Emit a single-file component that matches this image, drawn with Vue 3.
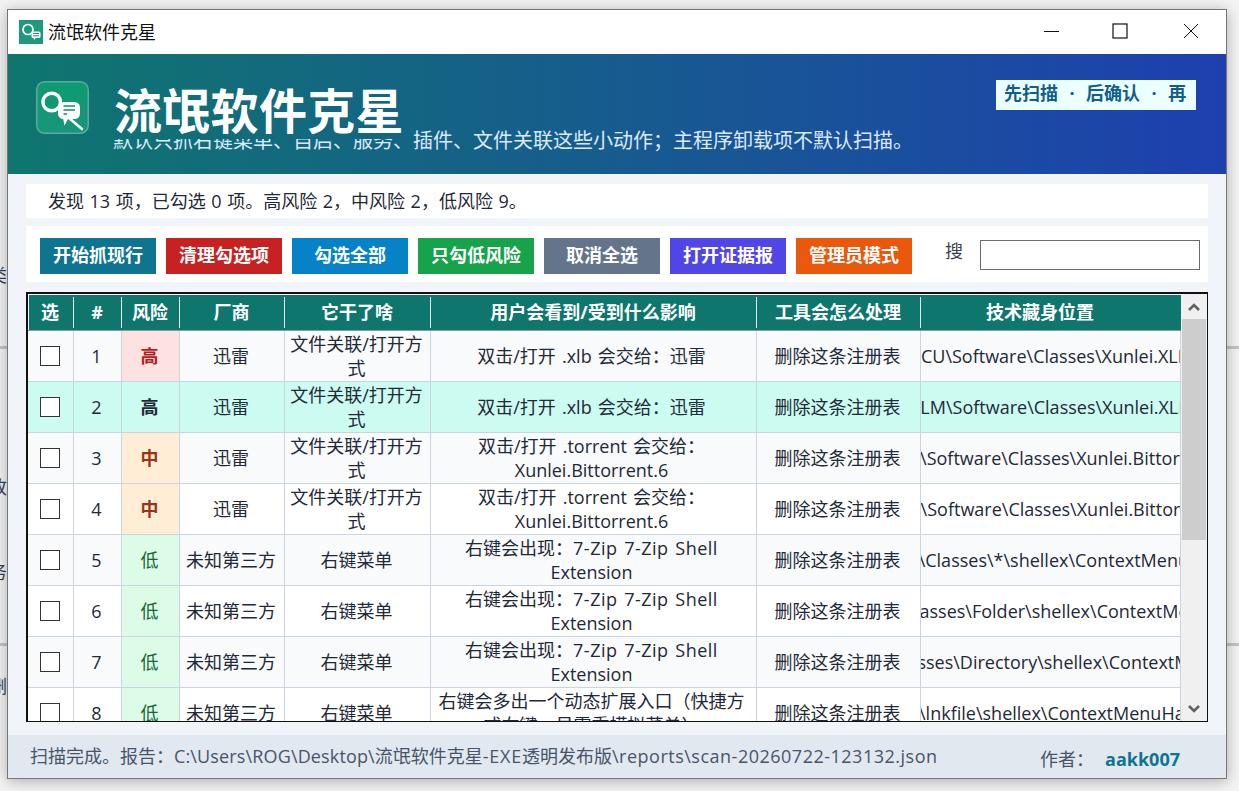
<script setup>
const cols = ['选', '#', '风险', '厂商', '它干了啥', '用户会看到/受到什么影响', '工具会怎么处理', '技术藏身位置']
const assoc = '文件关联/打开方式'
const menu = '右键菜单'
const zip = { pre: '右键会出现：', lat: '7-Zip 7-Zip Shell', post: ' Extension' }
const del = '删除这条注册表'
const rows = [
  { n: 1, risk: '高', rk: 'high', vendor: '迅雷', what: assoc, effect: { pre: '双击/打开 .xlb 会交给：迅雷' }, path: 'HKCU\\Software\\Classes\\Xunlei.XLB.6' },
  { n: 2, risk: '高', rk: 'sel', vendor: '迅雷', what: assoc, effect: { pre: '双击/打开 .xlb 会交给：迅雷' }, path: 'HKLM\\Software\\Classes\\Xunlei.XLB.6', selected: true },
  { n: 3, risk: '中', rk: 'mid', vendor: '迅雷', what: assoc, effect: { pre: '双击/打开 .torrent 会交给：Xunlei.Bittorrent.6' }, path: 'HKCU\\Software\\Classes\\Xunlei.Bittorrent.6' },
  { n: 4, risk: '中', rk: 'mid', vendor: '迅雷', what: assoc, effect: { pre: '双击/打开 .torrent 会交给：Xunlei.Bittorrent.6' }, path: 'HKLM\\Software\\Classes\\Xunlei.Bittorrent.6' },
  { n: 5, risk: '低', rk: 'low', vendor: '未知第三方', what: menu, effect: zip, path: 'HKLM\\Software\\Classes\\*\\shellex\\ContextMenuHandlers\\7-Zip' },
  { n: 6, risk: '低', rk: 'low', vendor: '未知第三方', what: menu, effect: zip, path: 'HKLM\\Software\\Classes\\Folder\\shellex\\ContextMenuHandlers\\7-Zip' },
  { n: 7, risk: '低', rk: 'low', vendor: '未知第三方', what: menu, effect: zip, path: 'HKLM\\Software\\Classes\\Directory\\shellex\\ContextMenuHandlers\\7-Zip' },
  { n: 8, risk: '低', rk: 'low', vendor: '未知第三方', what: menu, effect: { pre: '右键会多出一个动态扩展入口（快捷方式右键，虽需重模拟菜单）' }, path: 'HKCR\\lnkfile\\shellex\\ContextMenuHandler' },
]
const buttons = [
  { t: '开始抓现行', c: 'b1' }, { t: '清理勾选项', c: 'b2' }, { t: '勾选全部', c: 'b3' }, { t: '只勾低风险', c: 'b4' },
  { t: '取消全选', c: 'b5' }, { t: '打开证据报', c: 'b6' }, { t: '管理员模式', c: 'b7' },
]
</script>

<template>
  <div class="desk">
    <div class="bg-line l1"></div>
    <div class="bg-line l2"></div>
    <span class="bg-ch c1">类</span>
    <span class="bg-ch c2">改</span>
    <span class="bg-ch c3">务</span>
    <span class="bg-ch c4">删</span>

    <div class="window">
      <div class="titlebar">
        <svg class="app-icon" viewBox="0 0 24 24" width="24" height="24">
          <rect width="24" height="24" fill="#1c9a7b" />
          <circle cx="9" cy="9.5" r="5" fill="none" stroke="#fff" stroke-width="1.7" />
          <rect x="12.5" y="11.5" width="9" height="6.5" rx="1.5" fill="#fff" />
          <path d="M14 13.5h6M14 15.8h6" stroke="#1c9a7b" stroke-width="1" />
          <path d="M14.5 18h2l-1.2 2z" fill="#fff" />
        </svg>
        <span class="app-name">流氓软件克星</span>
        <div class="controls">
          <svg class="min" width="15" height="15" viewBox="0 0 15 15"><path d="M0 7.5h15" stroke="#111" stroke-width="1" /></svg>
          <svg width="16" height="16" viewBox="0 0 16 16"><rect x="1" y="1" width="14" height="14" fill="none" stroke="#111" stroke-width="1.2" /></svg>
          <svg width="16" height="16" viewBox="0 0 16 16"><path d="M1 1l14 14M15 1L1 15" stroke="#111" stroke-width="1" /></svg>
        </div>
      </div>

      <header class="hero">
        <svg class="logo" width="53" height="53" viewBox="0 0 53 53">
          <defs>
            <linearGradient id="lg" x1="0" y1="0" x2="0" y2="1">
              <stop offset="0" stop-color="#0f9a70" />
              <stop offset="1" stop-color="#17967a" />
            </linearGradient>
          </defs>
          <rect x="0.75" y="0.75" width="51.5" height="51.5" rx="8" fill="url(#lg)" stroke="#5fa9a0" stroke-width="1.5" />
          <circle cx="15.7" cy="21" r="8.8" fill="none" stroke="#fff" stroke-width="3.4" />
          <path d="M33 37l13 11" stroke="#fff" stroke-width="2.6" stroke-linecap="round" />
          <rect x="22" y="21" width="22" height="17" rx="5.5" fill="#fff" />
          <path d="M27 37l5 1-3.5 6.5z" fill="#fff" />
          <path d="M27.5 25h11.5M27.5 29h11.5M27.5 33h3.5" stroke="#11906f" stroke-width="1.5" />
        </svg>
        <div class="hero-text">
          <h1 class="hero-title">流氓软件克星</h1>
          <p class="hero-sub">默认只抓右键菜单、自启、服务、插件、文件关联这些小动作；主程序卸载项不默认扫描。</p>
        </div>
        <div class="badge">先扫描 · 后确认 · 再</div>
      </header>

      <main class="content">
        <div class="summary">发现 13 项，已勾选 0 项。高风险 2，中风险 2，低风险 9。</div>
        <div class="toolbar">
          <button v-for="b in buttons" :key="b.t" class="btn" :class="b.c">{{ b.t }}</button>
          <label class="search-label" for="q">搜</label>
          <input id="q" class="search" type="text" />
        </div>

        <div class="table-box">
          <div class="table">
            <div class="row head">
              <div v-for="c in cols" :key="c" class="th">{{ c }}</div>
            </div>
            <div v-for="r in rows" :key="r.n" class="row body" :class="{ sel: r.selected, odd: r.n % 2 === 1 }">
              <div class="td"><span class="check"></span></div>
              <div class="td">{{ r.n }}</div>
              <div class="td risk" :class="r.rk">{{ r.risk }}</div>
              <div class="td">{{ r.vendor }}</div>
              <div class="td">{{ r.what }}</div>
              <div class="td eff-cell"><div class="eff">{{ r.effect.pre }}<span class="lat">{{ r.effect.lat }}</span>{{ r.effect.post }}</div></div>
              <div class="td">{{ del }}</div>
              <div class="td path"><span>{{ r.path }}</span></div>
            </div>
          </div>
          <div class="scrollbar">
            <svg width="12" height="10" viewBox="0 0 12 10"><path d="M1 8l5-5 5 5" fill="none" stroke="#606060" stroke-width="2.6" /></svg>
            <div class="thumb"></div>
            <svg class="down" width="12" height="10" viewBox="0 0 12 10"><path d="M1 2l5 5 5-5" fill="none" stroke="#606060" stroke-width="2.6" /></svg>
          </div>
        </div>
      </main>

      <footer class="status">
        <span class="report">扫描完成。报告：<span class="ls1">C:\Users\ROG\Desktop\</span>流氓软件克星<span class="ls2">-EXE</span>透明发布版<span class="ls3">\reports\scan-20260722-123132.json</span></span>
        <span class="author-l">作者：</span>
        <span class="author">aakk007</span>
      </footer>
    </div>
  </div>
</template>

<style>
html, body { margin: 0; background: #f4f4f4; overflow: hidden; }
</style>

<style scoped>
.desk {
  position: relative;
  width: 1239px;
  height: 791px;
  padding: 9px 0 0 7px;
  box-sizing: border-box;
  overflow: hidden;
  background: #f4f4f4;
  font-family: "Open Sans", "Noto Sans CJK SC", sans-serif;
  font-size: 18px;
  color: #1f2937;
}
.bg-line { position: absolute; left: 0; width: 100%; height: 3px; background: #c4c4c4; }
.l1 { top: 346px; }
.l2 { top: 643px; }
.bg-ch { position: absolute; left: -11px; font-size: 18px; color: #334155; line-height: 20px; }
.c1 { top: 265px; }
.c2 { top: 477px; }
.c3 { top: 562px; }
.c4 { top: 676px; }

.window {
  position: relative;
  width: 1220px;
  height: 770px;
  box-sizing: border-box;
  border: 1px solid #767676;
  background: #f1f5f9;
  box-shadow: 0 2px 14px rgba(0, 0, 0, 0.3);
  display: flex;
  flex-direction: column;
}
.titlebar {
  height: 44px;
  flex: none;
  background: #fff;
  display: flex;
  align-items: center;
  padding-left: 11px;
  color: #111;
}
.app-icon { margin-top: -1px; }
.app-name { margin-left: 5px; font-size: 18px; line-height: 24px; margin-top: -1px; }
.controls {
  margin-left: auto;
  margin-right: 27px;
  display: flex;
  align-items: center;
  gap: 55px;
  margin-top: -2px;
}
.min { margin-right: -2px; }
.hero {
  height: 120px;
  flex: none;
  box-sizing: border-box;
  background: linear-gradient(90deg, #0f766e, #1e40af);
  padding: 26px 30px 0 28px;
  display: flex;
  align-items: flex-start;
}
.logo { flex: none; margin-top: 1px; }
.hero-text { flex: 1; min-width: 0; margin-left: 24px; margin-top: -1px; }
.hero-title {
  position: relative;
  z-index: 1;
  width: 295px;
  height: 60px;
  margin: 0;
  padding: 2px 0 0 1px;
  box-sizing: border-box;
  font-size: 48px;
  line-height: 60px;
  font-weight: 700;
  letter-spacing: 0.3px;
  color: #fff;
  white-space: nowrap;
  background: linear-gradient(90deg, #0f766e, #1e40af) -105px 0 / 1218px 100% no-repeat;
}
.hero-sub {
  margin: -11px 0 0;
  line-height: 26px;
  font-size: 20px;
  color: #dbeafe;
  white-space: nowrap;
}
.badge {
  flex: none;
  width: 200px;
  height: 30px;
  box-sizing: border-box;
  padding: 1px 0 0 8px;
  background: #ecfeff;
  color: #115e8b;
  font-weight: 700;
  font-size: 18px;
  line-height: 24px;
  word-spacing: 6.8px;
  white-space: nowrap;
  overflow: hidden;
}
.content {
  flex: 1;
  min-height: 0;
  padding: 10px 18px 13px;
  display: flex;
  flex-direction: column;
  gap: 8px;
}
.summary {
  height: 34px;
  flex: none;
  background: #fff;
  padding-left: 22px;
  line-height: 34px;
  word-spacing: 0.9px;
}
.toolbar {
  height: 56px;
  flex: none;
  box-sizing: border-box;
  background: #fff;
  padding: 0 8px 0 14px;
  display: flex;
  align-items: center;
  gap: 10px;
}
.btn {
  flex: none;
  width: 116px;
  height: 36px;
  margin-top: 4px;
  border: 0;
  padding: 0 0 2px;
  color: #fff;
  font: 700 18px/24px "Open Sans", "Noto Sans CJK SC", sans-serif;
}
.b1 { background: #0e7490; }
.b2 { background: #c62222; }
.b3 { background: #0583c6; }
.b4 { background: #16a34a; }
.b5 { background: #64748b; }
.b6 { background: #4f46e5; }
.b7 { background: #ea580c; }
.search-label {
  flex: none;
  margin-left: 23px;
  margin-top: -6px;
  line-height: 24px;
  color: #374151;
}
.search {
  flex: none;
  width: 220px;
  height: 30px;
  box-sizing: border-box;
  margin-left: 7px;
  margin-top: 2px;
  border: 1px solid #6b6b6b;
  background: #fff;
  padding: 0;
  outline: none;
}
.table-box {
  height: 430px;
  flex: none;
  margin-top: 2px;
  box-sizing: border-box;
  border-style: solid;
  border-color: #111;
  border-width: 2px 1px 1px 2px;
  background: #fff;
  display: flex;
  overflow: hidden;
}
.table { width: 1153px; flex: none; overflow: hidden; }
.row {
  display: grid;
  grid-template-columns: 46px 48px 58px 105px 146px 326px 164px 260px;
}
.head {
  height: 36px;
  margin-top: 1px;
  box-sizing: border-box;
  background: linear-gradient(#0f766e, #0f766e) 1px 0 no-repeat;
  border-bottom: 1px solid #8a9ba0;
}
.th {
  padding-right: 2px;
  color: #fff;
  font-weight: 700;
  font-size: 18px;
  line-height: 34px;
  text-align: center;
  background: linear-gradient(#e6f2f0, #e6f2f0) right center / 1px 31px no-repeat;
}
.th:last-child { padding-right: 22px; background: none; }
.body { height: 51px; background: #fff; }
.body.odd { background: #f8fafc; }
.body.sel { background: #ccfbf1; }
.td {
  box-sizing: border-box;
  border-right: 1px solid #cbd5e1;
  border-bottom: 1px solid #cbd5e1;
  padding: 0 5px 0 3px;
  display: flex;
  align-items: center;
  justify-content: center;
  text-align: center;
  line-height: 24px;
  color: #1f2937;
  overflow: hidden;
}
.eff-cell { padding: 0 7px 0 3px; }
.eff { word-spacing: 1.5px; }
.lat { letter-spacing: 0.5px; word-spacing: 1.5px; }
.check {
  width: 20px;
  height: 20px;
  box-sizing: border-box;
  border: 1px solid #333;
  background: #fff;
}
.risk { font-weight: 700; }
.high { background: #fee2e2; color: #b91c1c; }
.sel .risk { color: #1f2937; }
.mid { background: #ffedd5; color: #9a3412; }
.low { background: #dcfce7; color: #166534; font-weight: 400; }
.path { padding: 0; }
.path span { flex: none; white-space: nowrap; }
.scrollbar {
  flex: 1;
  background: #f0f0f0;
  display: flex;
  flex-direction: column;
  align-items: center;
  padding-top: 8px;
  box-sizing: border-box;
}
.thumb { width: 24px; height: 221px; margin-top: 7px; background: #cdcdcd; }
.down { margin-top: auto; margin-bottom: 7px; }
.status {
  height: 43px;
  flex: none;
  background: #e2e8f0;
  display: flex;
  align-items: center;
  padding: 0 46px 0 22px;
  color: #475569;
  line-height: 24px;
}
.report { margin-top: -2px; white-space: nowrap; }
.ls1 { letter-spacing: 0.14px; }
.ls2 { letter-spacing: 0.75px; }
.ls3 { letter-spacing: 0.5px; }
.author-l { margin-left: auto; margin-top: 4px; }
.author { margin-left: 11px; margin-top: 4px; font-weight: 700; color: #0e7490; }
</style>
